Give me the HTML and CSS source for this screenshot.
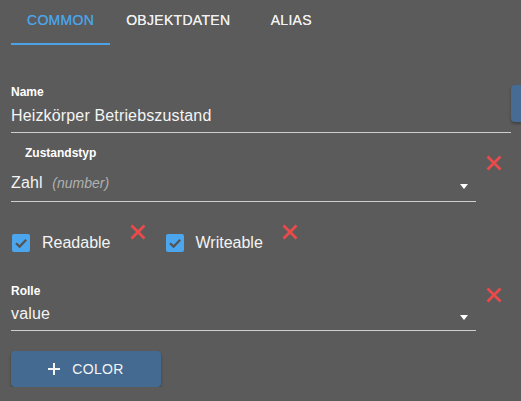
FILE: index.html
```html
<!DOCTYPE html>
<html>
<head>
<meta charset="utf-8">
<link rel="stylesheet" href="styles.css">
</head>
<body>
<div class="tabs">
  <div class="tab active">COMMON</div>
  <div class="tab">OBJEKTDATEN</div>
  <div class="tab">ALIAS</div>
</div>
<div class="form">
  <div class="row row-name">
    <div class="field field-wide">
      <div class="label">Name</div>
      <div class="value value-name">Heizkörper Betriebszustand</div>
    </div>
    <div class="side-btn"></div>
  </div>

  <div class="row row-type">
    <div class="field field-select">
      <div class="label label-indent">Zustandstyp</div>
      <div class="value value-type">Zahl <span class="hint">(number)</span><span class="arrow"></span></div>
    </div>
    <svg class="xicon x-type" viewBox="0 0 16 16"><path d="M1.5 1.5 14.5 14.5M14.5 1.5 1.5 14.5"/></svg>
  </div>

  <div class="row row-checks">
    <div class="check">
      <svg class="box" viewBox="0 0 18 18"><rect x="0" y="0" width="18" height="18" rx="2"/><path d="M4 9.2 7.6 12.6 14.2 5.8"/></svg>
      <span class="check-text">Readable</span>
    </div>
    <svg class="xicon x-check" viewBox="0 0 16 16"><path d="M1.5 1.5 14.5 14.5M14.5 1.5 1.5 14.5"/></svg>
    <div class="check">
      <svg class="box" viewBox="0 0 18 18"><rect x="0" y="0" width="18" height="18" rx="2"/><path d="M4 9.2 7.6 12.6 14.2 5.8"/></svg>
      <span class="check-text">Writeable</span>
    </div>
    <svg class="xicon x-check" viewBox="0 0 16 16"><path d="M1.5 1.5 14.5 14.5M14.5 1.5 1.5 14.5"/></svg>
  </div>

  <div class="row row-role">
    <div class="field field-select">
      <div class="label">Rolle</div>
      <div class="value value-role">value<span class="arrow"></span></div>
    </div>
    <svg class="xicon x-role" viewBox="0 0 16 16"><path d="M1.5 1.5 14.5 14.5M14.5 1.5 1.5 14.5"/></svg>
  </div>

  <button class="add-btn">
    <svg class="plus" viewBox="0 0 12 12"><path d="M6 0V12M0 6H12"/></svg>
    <span>COLOR</span>
  </button>
</div>
</body>
</html>
```
FILE: styles.css
```css
html, body {
  margin: 0;
  padding: 0;
  background: #5b5b5b;
  overflow: hidden;
  font-family: "Liberation Sans", Arial, sans-serif;
  color: #f2f2f2;
}

.tabs {
  display: flex;
  padding-left: 11px;
  height: 45px;
}

.tab {
  box-sizing: border-box;
  min-width: 90px;
  padding: 12px 16px 0;
  font-size: 14px;
  line-height: 16px;
  font-weight: normal;
  letter-spacing: 0.3px;
  text-align: center;
  color: #f0f0f0;
  text-shadow: 0 0 0.4px #f0f0f0;
  height: 45px;
}

.tab.active {
  color: #4ba2e6;
  text-shadow: 0 0 0.4px #4ba2e6;
  border-bottom: 2px solid #4ba2e6;
}

.form {
  padding-left: 11px;
}

.row {
  display: flex;
  align-items: flex-start;
}

.row-name {
  margin-top: 40px;
}

.field {
  border-bottom: 1px solid #cfcfcf;
  box-sizing: border-box;
}

.field-wide {
  width: 500px;
  flex: 0 0 500px;
}

.field-select {
  width: 465px;
  flex: 0 0 465px;
  position: relative;
}

.label {
  font-size: 12px;
  line-height: 14px;
  font-weight: bold;
  color: #ffffff;
}

.label-indent {
  padding-left: 14px;
}

.value {
  font-size: 16px;
  line-height: 18px;
  letter-spacing: 0.15px;
  color: #f4f4f4;
  position: relative;
}

.value-name {
  margin-top: 8px;
  padding-bottom: 7px;
}

.side-btn {
  width: 10px;
  height: 37px;
  flex: 0 0 10px;
  background: #466b94;
  border-radius: 4px 0 0 4px;
  box-shadow: 0 2px 3px rgba(0, 0, 0, 0.3);
}

.row-type {
  margin-top: 13px;
}

.value-type {
  margin-top: 14px;
  padding-bottom: 9px;
}

.hint {
  font-size: 14px;
  font-style: italic;
  letter-spacing: 0;
  color: #b0b0b0;
  margin-left: 5px;
}

.arrow {
  position: absolute;
  right: 8px;
  top: 10px;
  width: 0;
  height: 0;
  border-left: 4px solid transparent;
  border-right: 4px solid transparent;
  border-top: 5px solid #ffffff;
}

.xicon {
  width: 16px;
  height: 16px;
  flex: 0 0 16px;
  fill: none;
  stroke: #ea4a4a;
  stroke-width: 2.8;
}

.x-type {
  margin-left: 10px;
  margin-top: 9px;
}

.row-checks {
  margin-top: 22px;
}

.check {
  display: flex;
  align-items: center;
  margin-top: 10px;
}

.box {
  width: 18px;
  height: 18px;
  margin-left: 1px;
}

.box rect {
  fill: #4ba6ee;
}

.box path {
  fill: none;
  stroke: #545454;
  stroke-width: 2.2;
}

.check-text {
  font-size: 16px;
  line-height: 18px;
  margin-left: 12px;
  color: #f4f4f4;
}

.x-check {
  margin-left: 19px;
  margin-right: 19px;
}

.row-role {
  margin-top: 32px;
}

.value-role {
  margin-top: 7px;
  padding-bottom: 7px;
}

.x-role {
  margin-left: 10px;
  margin-top: 3px;
}

.add-btn {
  margin-top: 20px;
  width: 150px;
  height: 36px;
  border: none;
  border-radius: 4px;
  background: #456a92;
  box-shadow: 0 2px 3px rgba(0, 0, 0, 0.3);
  display: flex;
  align-items: center;
  justify-content: center;
  gap: 12px;
  font-family: "Liberation Sans", Arial, sans-serif;
  font-size: 14px;
  letter-spacing: 0.3px;
  color: #f4f4f4;
  padding: 0;
}

.plus {
  width: 12px;
  height: 12px;
  fill: none;
  stroke: #f4f4f4;
  stroke-width: 2;
}
```
